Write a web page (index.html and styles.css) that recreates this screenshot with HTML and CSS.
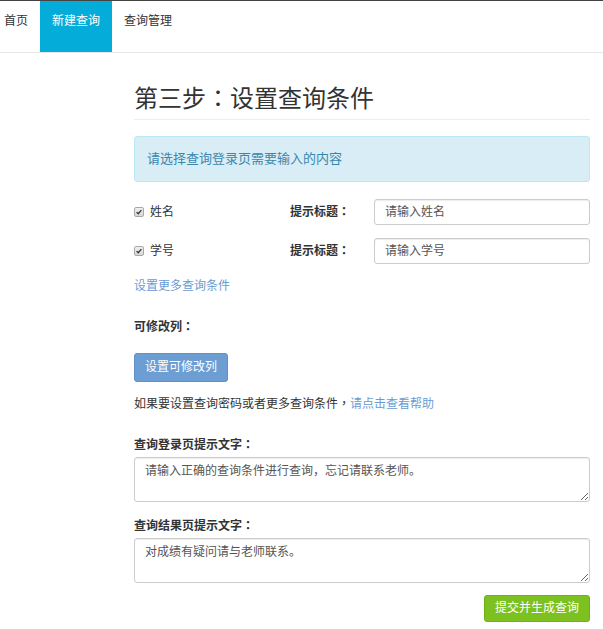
FILE: index.html
```html
<!DOCTYPE html>
<html lang="zh-CN">
<head>
<meta charset="utf-8">
<title>第三步：设置查询条件</title>
<link rel="stylesheet" href="styles.css">
</head>
<body>
<nav class="topnav">
  <a class="nav-item first" href="#">首页</a>
  <a class="nav-item active" href="#">新建查询</a>
  <a class="nav-item" href="#">查询管理</a>
</nav>
<main class="container">
  <h1 class="page-title">第三步<span class="cp" lang="zh-TW">：</span>设置查询条件</h1>
  <div class="alert">请选择查询登录页需要输入的内容</div>

  <div class="cond-row">
    <label class="check">
      <span class="checkbox"><svg viewBox="0 0 10 10" width="10" height="10"><path d="M2 5.2 L4 7.2 L8 2.6" fill="none" stroke="#333" stroke-width="1.6"/></svg></span>
      <span>姓名</span>
    </label>
    <span class="hint-label">提示标题<span class="cp" lang="zh-TW">：</span></span>
    <input class="text-input" type="text" placeholder="请输入姓名">
  </div>
  <div class="cond-row">
    <label class="check">
      <span class="checkbox"><svg viewBox="0 0 10 10" width="10" height="10"><path d="M2 5.2 L4 7.2 L8 2.6" fill="none" stroke="#333" stroke-width="1.6"/></svg></span>
      <span>学号</span>
    </label>
    <span class="hint-label">提示标题<span class="cp" lang="zh-TW">：</span></span>
    <input class="text-input" type="text" placeholder="请输入学号">
  </div>

  <a class="link more-link" href="#">设置更多查询条件</a>

  <div class="field-label editable-label">可修改列<span class="cp" lang="zh-TW">：</span></div>
  <button class="btn btn-blue" type="button">设置可修改列</button>

  <p class="help-line">如果要设置查询密码或者更多查询条件<span class="cp" lang="zh-TW">，</span><a class="link" href="#">请点击查看帮助</a></p>

  <div class="field-label first-area">查询登录页提示文字<span class="cp" lang="zh-TW">：</span></div>
  <textarea class="area">请输入正确的查询条件进行查询，忘记请联系老师。</textarea>

  <div class="field-label second-area">查询结果页提示文字<span class="cp" lang="zh-TW">：</span></div>
  <textarea class="area">对成绩有疑问请与老师联系。</textarea>

  <div class="actions">
    <button class="btn btn-green" type="button">提交并生成查询</button>
  </div>
</main>
</body>
</html>
```

FILE: styles.css
```css
* { box-sizing: border-box; }

html, body {
  margin: 0;
  padding: 0;
  background: #fff;
}

body {
  border-top: 1px solid #444;
  font-family: "Liberation Sans", "Noto Sans CJK SC", sans-serif;
  font-size: 12px;
  color: #333;
  line-height: 20px;
}

.cp {
  font-family: "Noto Sans CJK TC", "Noto Sans CJK SC", sans-serif;
  line-height: 0;
}

.topnav {
  display: flex;
  height: 52px;
  border-bottom: 1px solid #e7e7e7;
}

.nav-item {
  display: block;
  padding: 10px 12px 0;
  height: 51px;
  color: #333;
  text-decoration: none;
  font-size: 12px;
  line-height: 20px;
}

.nav-item.first {
  padding-left: 4px;
}

.nav-item.active {
  background: #03acd9;
  color: #fff;
}

.container {
  margin-left: 134px;
  width: 456px;
}

.page-title {
  margin: 32px 0 16px;
  padding-bottom: 7px;
  border-bottom: 1px solid #eee;
  font-size: 24px;
  font-weight: normal;
  line-height: 27px;
  color: #333;
}

.alert {
  background: #d9edf7;
  border: 1px solid #bce8f1;
  border-radius: 3px;
  color: #3a87ad;
  font-size: 13px;
  line-height: 16px;
  padding: 14px 12px;
}

.cond-row {
  display: grid;
  grid-template-columns: 156px 84px 216px;
  align-items: center;
  height: 26px;
  margin-top: 13px;
}

.alert + .cond-row {
  margin-top: 17px;
}

.check {
  display: flex;
  align-items: center;
  gap: 6px;
  font-size: 12px;
}

.checkbox {
  display: inline-flex;
  width: 10px;
  height: 10px;
  border: 1px solid #a8a8a8;
  border-radius: 2px;
  background: linear-gradient(#f0f0f0, #d6d6d6);
  align-items: center;
  justify-content: center;
}

.checkbox svg {
  width: 8px;
  height: 8px;
}

.hint-label {
  font-weight: bold;
  font-size: 12px;
}

.text-input {
  height: 26px;
  width: 216px;
  border: 1px solid #ccc;
  border-radius: 3px;
  padding: 0 10px;
  font-family: inherit;
  font-size: 12px;
  color: #555;
  box-shadow: inset 0 1px 1px rgba(0,0,0,0.075);
}

.text-input::placeholder {
  color: #555;
}

.link {
  color: #6a9bd4;
  text-decoration: none;
}

.more-link {
  display: block;
  margin-top: 12px;
}

.field-label {
  font-weight: bold;
}

.editable-label {
  margin-top: 21px;
}

.btn {
  font-family: inherit;
  font-size: 12px;
  line-height: 17px;
  border-radius: 3px;
  color: #fff;
  cursor: pointer;
  display: inline-block;
}

.btn-blue {
  margin-top: 16px;
  height: 29px;
  padding: 0 10px;
  background: #6c9dd3;
  border: 1px solid #5e92cc;
}

.help-line {
  margin: 12px 0 0;
}

.first-area {
  margin-top: 21px;
}

.second-area {
  margin-top: 14px;
}

.area {
  display: block;
  width: 456px;
  height: 45px;
  margin-top: 2px;
  border: 1px solid #ccc;
  border-radius: 3px;
  padding: 3px 10px;
  font-family: inherit;
  font-size: 12px;
  line-height: 20px;
  color: #555;
  box-shadow: inset 0 1px 1px rgba(0,0,0,0.075);
}

.actions {
  display: flex;
  justify-content: flex-end;
  margin-top: 12px;
}

.btn-green {
  height: 27px;
  padding: 0 10px;
  background: #7cc11f;
  border: 1px solid #70b118;
  font-size: 12px;
}
```
